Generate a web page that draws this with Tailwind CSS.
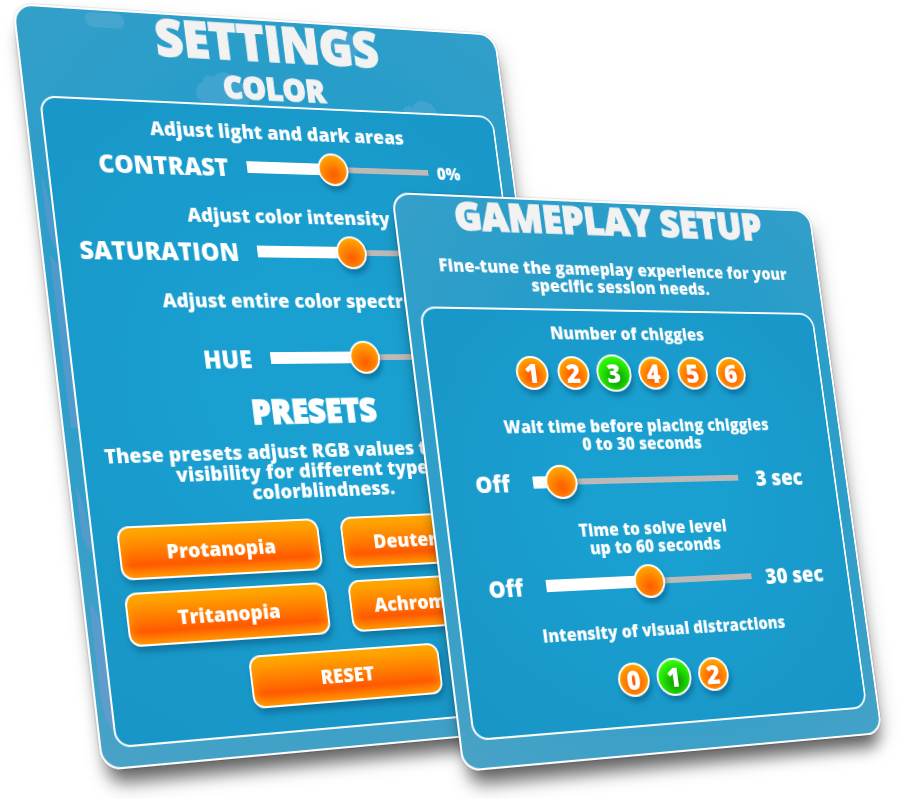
<!DOCTYPE html>
<html lang="en">
<head>
    <meta charset="UTF-8">
    <title>Settings</title>
    <meta name="viewport" content="width=device-width, initial-scale=1.0">
    <script src="https://cdn.jsdelivr.net/npm/@tailwindcss/browser@4"></script>
    <style>
      body { font-family: 'Open Sans', 'Noto Sans', sans-serif; }
      h1, h2 { -webkit-text-stroke: 1.5px currentColor; }

      /* Range knob */
      .slider::-webkit-slider-thumb {
        -webkit-appearance: none;
        width: 34px;
        height: 34px;
        border: 2px solid #fff;
        border-radius: 50%;
        background: radial-gradient(circle at 50% 68%, #ff6200 8%, #ff8a00 50%, #ffaa00 80%);
        box-shadow: 2px 5px 5px rgba(0, 60, 100, 0.4);
      }
    </style>
</head>
<body class="bg-white text-white font-extrabold">

    <main class="grid items-start justify-items-start min-h-screen overflow-hidden">

      <!-- Settings card -->
      <section class="relative col-start-1 row-start-1 w-[530px] h-[740px] rounded-[20px] border-2 border-white origin-top-left [transform:matrix3d(1.01274,0.06544,0,0.00020447,0.1185,1.01446,0,-0.00003032,0,0,1,0,12,3,0,1)] bg-[radial-gradient(circle_at_55%_35%,#229cca_20%,#329fc9_65%,#4aa2c6_100%)] shadow-[0_0_2px_rgba(0,0,0,0.3),0_18px_18px_-6px_rgba(0,0,0,0.6),8px_8px_20px_rgba(0,0,0,0.1)]">
        <!-- Clouds -->
        <svg class="absolute inset-0 w-full h-full" viewBox="0 0 526 736" fill="#b9cdf0" fill-opacity="0.16" aria-hidden="true">
          <rect x="70" y="2" width="40" height="15" rx="7" />
          <path d="M186 89a11 11 0 0 1-8-15c2-5 6-7 8-7 0-7 8-9 12-6 6-8 22-7 26 4 8 1 13 8 12 14-1 6-5 10-10 10z" />
          <path d="M406 88c-1-6 8-8 12-5 3-11 24-10 28 5z" />
          <circle cx="348" cy="20" r="15" />
          <g fill="#b08fd8" fill-opacity="0.26">
            <path d="M7 170q6 10 7 70q-8-10-7-40z" />
            <path d="M6 244l8 10v158h-7z" />
            <path d="M5 468q8 16 9 64q-9-8-9-30z" />
            <path d="M5 580q8 6 9 30v92q-9-10-9-50z" />
          </g>
        </svg>

        <header class="relative h-[88px] text-center text-[#f2f2f2]">
          <h1 class="text-[51px] leading-11">SETTINGS</h1>
          <h2 class="mt-2 text-[32px] leading-9">COLOR</h2>
        </header>

        <div class="relative mx-3.5 h-[630px] px-6 pt-3 border-2 border-white rounded-2xl bg-[radial-gradient(circle_at_50%_45%,#19a0d1_20%,#1895c6_100%)] text-center">
          <p class="text-xl leading-7">Adjust light and dark areas</p>
          <div class="flex items-center h-9 mt-1 -ml-8">
            <label for="contrast" class="w-[194px] shrink-0 text-right text-[25px] leading-9">CONTRAST</label>
            <input id="contrast" type="range" value="46" class="slider appearance-none w-[204px] h-9 shrink-0 ml-5 bg-no-repeat bg-[position:left_center] bg-[image:linear-gradient(#fff,#fff),linear-gradient(#bcb9b8,#bcb9b8)] bg-[length:46%_12px,100%_6px]">
            <output for="contrast" class="ml-2.5 text-lg">0%</output>
          </div>

          <p class="mt-[18px] text-xl leading-7">Adjust color intensity</p>
          <div class="flex items-center h-9 mt-1 -ml-8">
            <label for="saturation" class="w-[194px] shrink-0 text-right text-[25px] leading-9">SATURATION</label>
            <input id="saturation" type="range" value="51" class="slider appearance-none w-[204px] h-9 shrink-0 ml-5 bg-no-repeat bg-[position:left_center] bg-[image:linear-gradient(#fff,#fff),linear-gradient(#bcb9b8,#bcb9b8)] bg-[length:50%_12px,100%_6px]">
            <output for="saturation" class="ml-2.5 text-lg">0%</output>
          </div>

          <p class="mt-[18px] text-xl leading-7">Adjust entire color spectrum</p>
          <div class="flex items-center h-9 mt-[26px] -ml-8">
            <label for="hue" class="w-[194px] shrink-0 text-right text-[25px] leading-9">HUE</label>
            <input id="hue" type="range" value="51" class="slider appearance-none w-[204px] h-9 shrink-0 ml-5 bg-no-repeat bg-[position:left_center] bg-[image:linear-gradient(#fff,#fff),linear-gradient(#bcb9b8,#bcb9b8)] bg-[length:50%_12px,100%_6px]">
            <output for="hue" class="ml-2.5 text-lg">0%</output>
          </div>

          <h2 class="mt-4 text-[33px] leading-10">PRESETS</h2>
          <p class="mt-2.5 -mx-2 text-xl leading-5">These presets adjust RGB values to enhance<br>visibility for different types of<br>colorblindness.</p>

          <div class="grid grid-cols-2 gap-x-6 gap-y-3 mt-[18px] text-xl">
            <button class="h-[52px] border-2 border-white rounded-xl bg-linear-to-b from-[#fda800] from-5% via-[#ff5800] via-75% to-[#ff8a00] shadow-[inset_0_0_12px_#ffa200,2px_5px_6px_rgba(0,60,100,0.4)]">Protanopia</button>
            <button class="h-[52px] border-2 border-white rounded-xl bg-linear-to-b from-[#fda800] from-5% via-[#ff5800] via-75% to-[#ff8a00] shadow-[inset_0_0_12px_#ffa200,2px_5px_6px_rgba(0,60,100,0.4)]">Deuteranopia</button>
            <button class="h-[52px] border-2 border-white rounded-xl bg-linear-to-b from-[#fda800] from-5% via-[#ff5800] via-75% to-[#ff8a00] shadow-[inset_0_0_12px_#ffa200,2px_5px_6px_rgba(0,60,100,0.4)]">Tritanopia</button>
            <button class="h-[52px] border-2 border-white rounded-xl bg-linear-to-b from-[#fda800] from-5% via-[#ff5800] via-75% to-[#ff8a00] shadow-[inset_0_0_12px_#ffa200,2px_5px_6px_rgba(0,60,100,0.4)]">Achromatopsia</button>
          </div>
          <button class="w-[208px] h-[52px] mt-4 border-2 border-white rounded-xl bg-linear-to-b from-[#fda800] from-5% via-[#ff5800] via-75% to-[#ff8a00] shadow-[inset_0_0_12px_#ffa200,2px_5px_6px_rgba(0,60,100,0.4)] text-xl">RESET</button>
        </div>
      </section>

      <!-- Gameplay card -->
      <section class="relative col-start-1 row-start-1 w-[463px] h-[560px] rounded-[18px] border-2 border-white origin-top-left [transform:matrix3d(1.08965,0.08724,0,0.00022904,0.11127,1.00698,0,-0.00003721,0,0,1,0,391,192,0,1)] bg-[radial-gradient(circle_at_55%_35%,#229cca_20%,#329fc9_65%,#4aa2c6_100%)] shadow-[0_0_2px_rgba(0,0,0,0.3),0_18px_18px_-6px_rgba(0,0,0,0.6),8px_8px_20px_rgba(0,0,0,0.1)] text-center">
        <header class="h-[110px]">
          <h1 class="text-[38px] leading-9 text-[#f2f2f2]">GAMEPLAY SETUP</h1>
          <p class="mt-6 text-[17px] leading-[18px]">Fine-tune the gameplay experience for your<br>specific session needs.</p>
        </header>

        <div class="mx-3 h-[420px] pt-3.5 border-2 border-white rounded-2xl bg-[radial-gradient(circle_at_50%_45%,#19a0d1_20%,#1895c6_100%)] text-[17px] leading-[18px]">
          <p>Number of chiggies</p>
          <div class="flex justify-center items-center h-[38px] mt-3 text-[26px] leading-7">
            <div class="w-11"><button class="size-[34px] border-2 border-white rounded-full bg-[radial-gradient(circle_at_50%_60%,#ff5a00_15%,#ffa800_75%)] shadow-[2px_5px_5px_rgba(0,60,100,0.4)]">1</button></div>
            <div class="w-11"><button class="size-[34px] border-2 border-white rounded-full bg-[radial-gradient(circle_at_50%_60%,#ff5a00_15%,#ffa800_75%)] shadow-[2px_5px_5px_rgba(0,60,100,0.4)]">2</button></div>
            <div class="w-11"><button aria-pressed="true" class="size-[38px] border-2 border-white rounded-full bg-[radial-gradient(circle_at_55%_65%,#0a9800_5%,#22e000_50%,#3cff10_80%)] shadow-[2px_5px_5px_rgba(0,60,100,0.4)]">3</button></div>
            <div class="w-11"><button class="size-[34px] border-2 border-white rounded-full bg-[radial-gradient(circle_at_50%_60%,#ff5a00_15%,#ffa800_75%)] shadow-[2px_5px_5px_rgba(0,60,100,0.4)]">4</button></div>
            <div class="w-11"><button class="size-[34px] border-2 border-white rounded-full bg-[radial-gradient(circle_at_50%_60%,#ff5a00_15%,#ffa800_75%)] shadow-[2px_5px_5px_rgba(0,60,100,0.4)]">5</button></div>
            <div class="w-11"><button class="size-[34px] border-2 border-white rounded-full bg-[radial-gradient(circle_at_50%_60%,#ff5a00_15%,#ffa800_75%)] shadow-[2px_5px_5px_rgba(0,60,100,0.4)]">6</button></div>
          </div>

          <label for="wait" class="block mt-[26px]">Wait time before placing chiggies<br>0 to 30 seconds</label>
          <div class="flex items-center h-9 mt-2.5 text-[22px]">
            <span class="w-[68px] text-right">Off</span>
            <input id="wait" type="range" min="1" max="30" value="3" class="slider appearance-none w-[226px] h-9 ml-6 bg-no-repeat bg-[position:left_center] bg-[image:linear-gradient(#fff,#fff),linear-gradient(#bcb9b8,#bcb9b8)] bg-[length:12%_12px,100%_6px]">
            <output for="wait" class="ml-5">3 sec</output>
          </div>

          <label for="solve" class="block mt-[22px]">Time to solve level<br>up to 60 seconds</label>
          <div class="flex items-center h-9 mt-2 text-[22px]">
            <span class="w-[68px] text-right">Off</span>
            <input id="solve" type="range" min="1" max="60" value="30" class="slider appearance-none w-[226px] h-9 ml-6 bg-no-repeat bg-[position:left_center] bg-[image:linear-gradient(#fff,#fff),linear-gradient(#bcb9b8,#bcb9b8)] bg-[length:49%_12px,100%_6px]">
            <output for="solve" class="ml-4">30 sec</output>
          </div>

          <p class="mt-[22px]">Intensity of visual distractions</p>
          <div class="flex justify-center items-center h-[38px] mt-5 text-[26px] leading-7">
            <div class="w-11"><button class="size-[34px] border-2 border-white rounded-full bg-[radial-gradient(circle_at_50%_60%,#ff5a00_15%,#ffa800_75%)] shadow-[2px_5px_5px_rgba(0,60,100,0.4)]">0</button></div>
            <div class="w-11"><button aria-pressed="true" class="size-[38px] border-2 border-white rounded-full bg-[radial-gradient(circle_at_55%_65%,#0a9800_5%,#22e000_50%,#3cff10_80%)] shadow-[2px_5px_5px_rgba(0,60,100,0.4)]">1</button></div>
            <div class="w-11"><button class="size-[34px] border-2 border-white rounded-full bg-[radial-gradient(circle_at_50%_60%,#ff5a00_15%,#ffa800_75%)] shadow-[2px_5px_5px_rgba(0,60,100,0.4)]">2</button></div>
          </div>
        </div>
      </section>

    </main>
</body>
</html>
